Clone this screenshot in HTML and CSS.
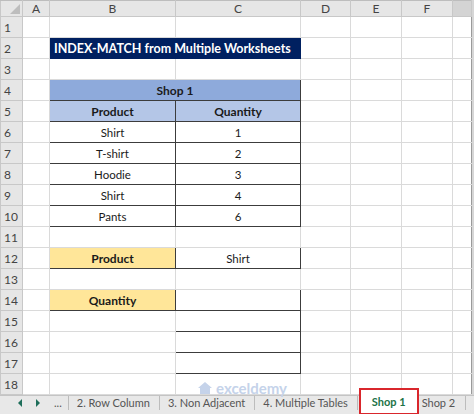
FILE: index.html
```html
<!DOCTYPE html>
<html>
<head>
    <title>INDEX-MATCH from Multiple Worksheets</title>
    <link rel="stylesheet" href="styles.css">
</head>
<body>
    <div class="workbook">
        <table class="sheet">
            <colgroup>
                <col class="col-rh">
                <col class="col-a">
                <col class="col-b">
                <col class="col-c">
                <col class="col-d">
                <col class="col-e">
                <col class="col-f">
                <col class="col-g">
            </colgroup>
            <tr class="col-heads">
                <th class="corner"><span class="corner-tri"></span></th>
                <th>A</th><th>B</th><th>C</th><th>D</th><th>E</th><th>F</th><th class="head-g"></th>
            </tr>
            <tr><th class="rh">1</th><td></td><td></td><td></td><td></td><td></td><td></td><td class="g"></td></tr>
            <tr><th class="rh">2</th><td></td><td colspan="2" class="title">INDEX-MATCH from Multiple Worksheets</td><td></td><td></td><td></td><td class="g"></td></tr>
            <tr><th class="rh">3</th><td></td><td></td><td></td><td></td><td></td><td></td><td class="g"></td></tr>
            <tr><th class="rh">4</th><td></td><td colspan="2" class="box shop">Shop 1</td><td></td><td></td><td></td><td class="g"></td></tr>
            <tr><th class="rh">5</th><td></td><td class="box head">Product</td><td class="box head">Quantity</td><td></td><td></td><td></td><td class="g"></td></tr>
            <tr><th class="rh">6</th><td></td><td class="box">Shirt</td><td class="box">1</td><td></td><td></td><td></td><td class="g"></td></tr>
            <tr><th class="rh">7</th><td></td><td class="box">T-shirt</td><td class="box">2</td><td></td><td></td><td></td><td class="g"></td></tr>
            <tr><th class="rh">8</th><td></td><td class="box">Hoodie</td><td class="box">3</td><td></td><td></td><td></td><td class="g"></td></tr>
            <tr><th class="rh">9</th><td></td><td class="box">Shirt</td><td class="box">4</td><td></td><td></td><td></td><td class="g"></td></tr>
            <tr><th class="rh">10</th><td></td><td class="box">Pants</td><td class="box">6</td><td></td><td></td><td></td><td class="g"></td></tr>
            <tr><th class="rh">11</th><td></td><td></td><td></td><td></td><td></td><td></td><td class="g"></td></tr>
            <tr><th class="rh">12</th><td></td><td class="box label">Product</td><td class="box">Shirt</td><td></td><td></td><td></td><td class="g"></td></tr>
            <tr><th class="rh">13</th><td></td><td></td><td></td><td></td><td></td><td></td><td class="g"></td></tr>
            <tr><th class="rh">14</th><td></td><td class="box label">Quantity</td><td class="box"></td><td></td><td></td><td></td><td class="g"></td></tr>
            <tr><th class="rh">15</th><td></td><td></td><td class="box"></td><td></td><td></td><td></td><td class="g"></td></tr>
            <tr><th class="rh">16</th><td></td><td></td><td class="box"></td><td></td><td></td><td></td><td class="g"></td></tr>
            <tr><th class="rh">17</th><td></td><td></td><td class="box"></td><td></td><td></td><td></td><td class="g"></td></tr>
            <tr><th class="rh">18</th><td></td><td></td><td></td><td></td><td></td><td></td><td class="g"></td></tr>
        </table>

        <div class="tabbar">
            <span class="nav">
                <svg width="6" height="8" viewBox="0 0 6 8"><path d="M5 0 L1 4 L5 8 Z" fill="#1e6e5a"/></svg>
            </span>
            <span class="nav">
                <svg width="6" height="8" viewBox="0 0 6 8"><path d="M1 0 L5 4 L1 8 Z" fill="#1e6e5a"/></svg>
            </span>
            <span class="more">...</span>
            <span class="tab">2. Row Column</span>
            <span class="tab">3. Non Adjacent</span>
            <span class="tab">4. Multiple Tables</span>
            <span class="tab active">Shop 1</span>
            <span class="tab last">Shop 2</span>
        </div>

        <!-- watermark -->
        <div class="watermark">
            <svg width="16" height="14" viewBox="0 0 16 14">
                <path d="M1 7 L8 1 L15 7 L13 7 L13 13 L3 13 L3 7 Z" fill="#c5d3ea"/>
            </svg>
            <span>exceldemy</span>
        </div>
    </div>
</body>
</html>
```

FILE: styles.css
```css
/* sheet layout */
body {
    margin: 0;
    background: #fff;
    font-family: Lato, "Liberation Sans", sans-serif;
}

.workbook {
    position: relative;
    width: 474px;
    height: 414px;
    overflow: hidden;
    background: #d6d6d6;
}

.sheet {
    table-layout: fixed;
    border-collapse: collapse;
    width: 471px;
    background: #fff;
    border-right: 1px solid #9a9a9a;
}

.col-rh { width: 22px; }
.col-a { width: 27px; }
.col-b { width: 126px; }
.col-c { width: 125px; }
.col-d { width: 50px; }
.col-e { width: 51px; }
.col-f { width: 51px; }
.col-g { width: 19px; }

.sheet td,
.sheet th {
    padding: 0;
    height: 20px;
    border: 1px solid #dadada;
    font-size: 11.5px;
    color: #222;
    text-align: center;
    white-space: nowrap;
    overflow: hidden;
}

.col-heads th {
    height: 15px;
    background: #e6e6e6;
    border-color: #c8c8c8;
    border-top: 1px solid #bdbdbd;
    font-weight: normal;
    font-size: 12px;
    color: #444;
}

.col-heads .head-g {
    background: #d4d4d4;
}

.corner {
    position: relative;
}

.corner-tri {
    position: absolute;
    right: 2px;
    bottom: 2px;
    border-style: solid;
    border-width: 0 0 10px 10px;
    border-color: transparent transparent #bdbdbd transparent;
}

.sheet .rh {
    background: #e6e6e6;
    border-color: #c8c8c8;
    font-weight: normal;
    font-size: 12px;
    color: #444;
    text-align: left;
    padding-left: 3px;
}

.sheet .g {
    border-right: none;
}

/* cells with data */
.sheet .box {
    border: 1px solid #3c3c3c;
    color: #1a1a1a;
}

.sheet .title {
    background: #002060;
    color: #fff;
    font-weight: bold;
    font-size: 12.5px;
    text-align: left;
    padding-left: 4px;
    border: 1px solid #002060;
}

.sheet .shop {
    background: #8eaadb;
    font-weight: bold;
    font-size: 12px;
}

.sheet .head {
    background: #b4c6e7;
    font-weight: bold;
    font-size: 12px;
}

.sheet .label {
    background: #ffe699;
    font-weight: bold;
    font-size: 12px;
}

/* sheet tabs */
.tabbar {
    display: flex;
    align-items: center;
    height: 14px;
    padding-bottom: 5px;
    background: #e8e8e8;
    border-top: 1px solid #c4c4c4;
    border-bottom: 2px solid #9c9c9c;
    font-size: 11px;
    color: #555;
}

.nav {
    display: flex;
    width: 6px;
    margin-left: 12px;
}

.nav:first-child {
    margin-left: 17px;
}

.more {
    margin-left: 13px;
    padding-right: 6px;
    color: #555;
    border-right: 1px solid #bcbcbc;
    line-height: 14px;
}

.tab {
    padding: 0 9px 0 8px;
    border-right: 1px solid #bcbcbc;
    line-height: 14px;
    white-space: nowrap;
}

.tab.active {
    align-self: stretch;
    display: flex;
    align-items: center;
    background: #fff;
    color: #217346;
    font-weight: bold;
    padding: 0 11px;
    border: 2px solid #d9262c;
    margin: -8px 0 -5px 1px;
    line-height: normal;
}

.tab.last {
    padding: 0 10px 0 3px;
}

.watermark {
    position: absolute;
    left: 197px;
    top: 379px;
    display: flex;
    align-items: center;
    gap: 3px;
    color: #c5d3ea;
    font-size: 15px;
    font-weight: bold;
}
```
